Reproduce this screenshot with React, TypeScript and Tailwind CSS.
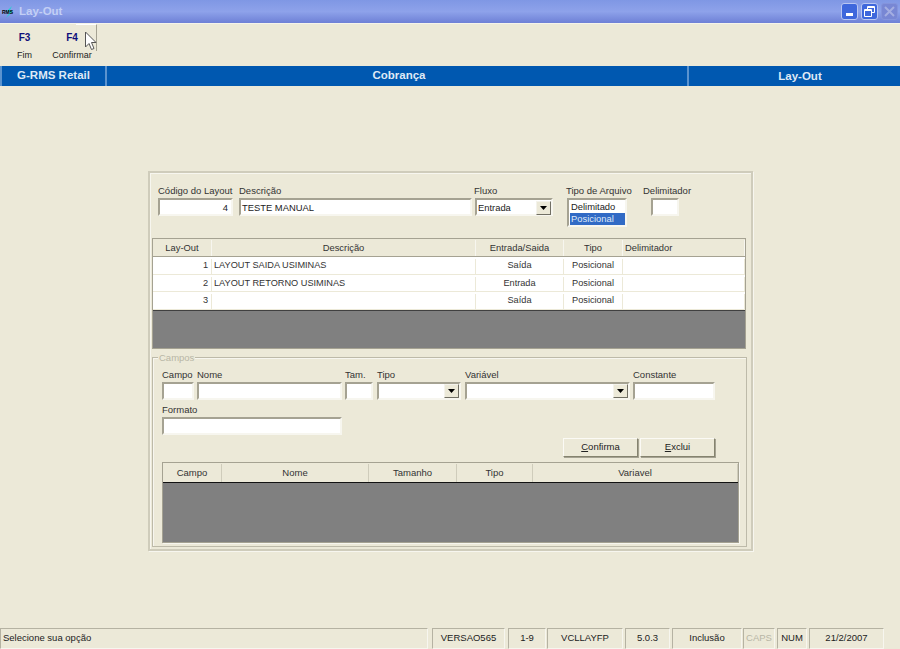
const font = { fontFamily: '"Liberation Sans", Arial, sans-serif' }

const sunken =
  "border-2 border-t-[#a5a292] border-l-[#a5a292] border-r-[#f7f6ef] border-b-[#f7f6ef] bg-white"

const Field = ({ className = "", children }: { className?: string; children?: React.ReactNode }) => (
  <div className={`${sunken} h-[18px] flex items-center px-px text-[9.4px] leading-none text-[#222] ${className}`}>
    {children}
  </div>
)

const Arrow = () => (
  <div className="ml-auto -mr-px flex h-[14px] w-[15px] shrink-0 items-center justify-center border border-t-[#f4f3ec] border-l-[#f4f3ec] border-r-[#716f64] border-b-[#716f64] bg-[#ece9d8]">
    <svg width="7" height="4" viewBox="0 0 7 4">
      <path d="M0 0h7L3.5 4z" fill="#000" />
    </svg>
  </div>
)

const Label = ({ children, className = "" }: { children: React.ReactNode; className?: string }) => (
  <div className={`h-[14px] whitespace-nowrap text-[9.5px] leading-[14px] text-[#333] ${className}`}>{children}</div>
)

const layoutCols = ["w-[59px]", "w-[264px]", "w-[88px]", "w-[59px]", "flex-1"]
const layoutHead = ["Lay-Out", "Descrição", "Entrada/Saida", "Tipo", "Delimitador"]
const layoutRows = [
  ["1", "LAYOUT SAIDA USIMINAS", "Saída", "Posicional", ""],
  ["2", "LAYOUT RETORNO USIMINAS", "Entrada", "Posicional", ""],
  ["3", "", "Saída", "Posicional", ""],
]

const campoCols = ["w-[59px]", "w-[147px]", "w-[88px]", "w-[76px]", "flex-1"]
const campoHead = ["Campo", "Nome", "Tamanho", "Tipo", "Variavel"]

const statusItems = [
  { text: "VERSAO565", w: "w-[73px]", ml: "ml-[4px]" },
  { text: "1-9", w: "w-[38px]", ml: "ml-[3px]" },
  { text: "VCLLAYFP", w: "w-[76px]", ml: "ml-[1px]" },
  { text: "5.0.3", w: "w-[45px]", ml: "ml-[2px]" },
  { text: "Inclusão", w: "w-[70px]", ml: "ml-[2px]" },
  { text: "CAPS", w: "w-[32px]", ml: "ml-[1px]", off: true },
  { text: "NUM", w: "w-[30px]", ml: "ml-[2px]" },
  { text: "21/2/2007", w: "w-[75px]", ml: "ml-[2px]" },
]

export default function App() {
  return (
    <div className="flex h-[649px] w-[900px] flex-col overflow-hidden bg-[#ece9d8]" style={font}>
      {/* title bar */}
      <div className="flex h-[24px] shrink-0 items-center border-b border-[#f5f4ea] bg-gradient-to-b from-[#7f97e4] via-[#8ea2ea] to-[#6e80d6] pr-[2px]">
        <div className="relative ml-[1px] h-[14px] w-[17px] shrink-0">
          <svg className="absolute left-[4px] top-0" width="9" height="14" viewBox="0 0 9 14">
            <path d="M7 1 2 6l3 1-4 6 7-7-3-1z" fill="#19d6d0" />
          </svg>
          <span className="absolute left-[1px] top-[4px] text-[5px] font-bold leading-[6px] text-black">RMS</span>
        </div>
        <span className="ml-[1px] text-[11.5px] font-bold text-[#c3cff5]">Lay-Out</span>
        <div className="ml-auto flex items-center gap-[3px]">
          <div className="flex h-[17px] w-[17px] items-end justify-center rounded-[3px] border border-[#b9c6f2] bg-[#3e67dc] pb-[3px]">
            <div className="h-[3px] w-[7px] bg-white" />
          </div>
          <div className="flex h-[17px] w-[17px] items-center justify-center rounded-[3px] border border-[#b9c6f2] bg-[#3e67dc]">
            <svg width="11" height="11" viewBox="0 0 11 11" fill="none" stroke="#fff">
              <path d="M3.5 3V.5h7v6H8" />
              <path d="M.5 3.5h7v7h-7z" />
              <path d="M.5 4.5h7M3.5 1.5h7" />
            </svg>
          </div>
          <div className="flex h-[17px] w-[17px] items-center justify-center rounded-[3px] border border-[#8494dc] bg-[#7887d4]">
            <svg width="11" height="11" viewBox="0 0 11 11" stroke="#a4aee2" strokeWidth="2">
              <path d="M1 1l9 9M10 1l-9 9" />
            </svg>
          </div>
        </div>
      </div>

      {/* toolbar */}
      <div className="relative flex h-[42px] shrink-0 pl-[1px]">
        <div className="flex w-[47px] flex-col items-center pt-[8px]">
          <span className="text-[10px] font-bold leading-[12px] text-[#10107a]">F3</span>
          <span className="mt-[5px] text-[9px] leading-[12px] text-[#222]">Fim</span>
        </div>
        <div className="flex w-[48px] flex-col items-center pt-[8px]">
          <span className="text-[10px] font-bold leading-[12px] text-[#10107a]">F4</span>
          <span className="mt-[5px] whitespace-nowrap text-[9px] leading-[12px] text-[#222]">Confirmar</span>
        </div>
        <div className="absolute left-[76px] top-0 h-[27px] w-[21px] border-r border-t border-r-[#a5a292] border-t-white" />
        <svg className="absolute left-[84px] top-[7px]" width="13" height="20" viewBox="0 0 13 20">
          <path d="M1.5 1v15l3.5-3.5 2.5 6 2.5-1-2.5-6h4.5z" fill="#fff" stroke="#555" strokeWidth="1" />
        </svg>
      </div>

      {/* header strip */}
      <div className="flex h-[20px] shrink-0 items-center bg-[#0058b0] text-[11.5px] font-bold text-[#dfe9f5]">
        <div className="flex h-full w-[107px] items-center justify-center border-x-2 border-x-[#5a93cf]">G-RMS Retail</div>
        <div className="flex h-full w-[580px] items-center justify-center pl-[4px]">Cobrança</div>
        <div className="flex h-full flex-1 items-center justify-center border-l-2 border-l-[#5a93cf] pl-[11px] pt-px">Lay-Out</div>
      </div>

      {/* main panel */}
      <div className="flex-1 pl-[148px] pt-[85px]">
        <div className="h-[380px] w-[605px] border-2 border-[#cfccbb] shadow-[inset_1px_1px_0_#f7f6ef,1px_1px_0_#f7f6ef]">
          {/* top fields */}
          <div className="flex pl-[8px] pt-[11px]">
            <div className="w-[81px]">
              <Label>Código do Layout</Label>
              <Field className="w-[75px] justify-end pr-[3px] pt-[2px]">4</Field>
            </div>
            <div className="w-[235px]">
              <Label>Descrição</Label>
              <Field className="w-[233px] pl-[1px] pt-[2px]">TESTE MANUAL</Field>
            </div>
            <div className="w-[92px]">
              <Label>Fluxo</Label>
              <Field className="ml-px w-[78px] pl-[1px] pt-[2px]">
                Entrada
                <Arrow />
              </Field>
            </div>
            <div className="w-[77px]">
              <Label>Tipo de Arquivo</Label>
              <div className={`${sunken} ml-px w-[60px] pl-[1px] text-[9.4px] leading-[13px] text-[#222]`}>
                <div className="h-[13px] pl-px">Delimitado</div>
                <div className="h-[12px] bg-[#316ac5] pl-px leading-[12px] text-[#dfe8f8]">Posicional</div>
              </div>
            </div>
            <div>
              <Label>Delimitador</Label>
              <Field className="ml-[8px] w-[28px]" />
            </div>
          </div>

          {/* layouts grid */}
          <div className="ml-[2px] mt-[11px] flex h-[111px] w-[594px] flex-col border border-[#a5a292] bg-[#808080]">
            <div className="flex h-[18px] shrink-0 border-b border-[#a5a292] bg-[#ece9d8] pt-px text-[9.4px] text-[#333]">
              {layoutHead.map((h, i) => (
                <div
                  key={h}
                  className={`${layoutCols[i]} flex items-center border-r border-r-[#f7f6ef] ${i === 4 ? "pl-[2px]" : "justify-center"}`}
                >
                  {h}
                </div>
              ))}
            </div>
            {layoutRows.map((row) => (
              <div key={row[0]} className="flex h-[17.5px] shrink-0 border-b border-[#ece9d8] bg-white pt-[2px] text-[9.2px] text-[#333]">
                {row.map((c, i) => (
                  <div
                    key={i}
                    className={`${layoutCols[i]} flex items-center border-r border-r-[#ece9d8] ${
                      i === 0 ? "justify-end pr-[3px]" : i === 1 ? "pl-[2px]" : "justify-center"
                    }`}
                  >
                    {c}
                  </div>
                ))}
              </div>
            ))}
            <div className="flex-1 border-t border-[#404040]" />
          </div>

          {/* Campos group */}
          <div className="relative ml-[2px] mt-[8px] h-[190px] w-[595px] border border-[#bdbaa9] pl-[9px] pt-[10px] shadow-[inset_1px_1px_0_#f7f6ef]">
            <span className="absolute -top-[6px] left-[5px] bg-[#ece9d8] px-px text-[9.5px] leading-[12px] text-[#b8b6a6]">Campos</span>
            <div className="flex">
              <div className="mr-[3px] w-[32px]">
                <Label>Campo</Label>
                <Field className="w-[32px]" />
              </div>
              <div className="mr-[3px] w-[145px]">
                <Label>Nome</Label>
                <Field className="w-[145px]" />
              </div>
              <div className="mr-[4px] w-[28px]">
                <Label>Tam.</Label>
                <Field className="w-[28px]" />
              </div>
              <div className="mr-[4px] w-[84px]">
                <Label>Tipo</Label>
                <Field className="w-[84px]">
                  <Arrow />
                </Field>
              </div>
              <div className="mr-[3px] w-[165px]">
                <Label>Variável</Label>
                <Field className="w-[165px]">
                  <Arrow />
                </Field>
              </div>
              <div className="w-[82px]">
                <Label>Constante</Label>
                <Field className="w-[82px]" />
              </div>
            </div>
            <div className="mt-[3px] w-[180px]">
              <Label>Formato</Label>
              <Field className="w-[180px]" />
            </div>

            <div className="ml-[401px] mt-[3px] flex h-[20px] gap-[2px]">
              <button className="h-[19px] w-[75px] border border-t-[#fbfaf5] border-l-[#fbfaf5] border-r-[#85836f] border-b-[#85836f] bg-[#ece9d8] text-[9.5px] text-[#222] shadow-[1px_1px_0_#a5a292]">
                <span className="underline">C</span>onfirma
              </button>
              <button className="h-[19px] w-[75px] border border-t-[#fbfaf5] border-l-[#fbfaf5] border-r-[#85836f] border-b-[#85836f] bg-[#ece9d8] text-[9.5px] text-[#222] shadow-[1px_1px_0_#a5a292]">
                <span className="underline">E</span>xclui
              </button>
            </div>

            <div className="mt-[4px] flex h-[81px] w-[577px] flex-col border border-[#a5a292] bg-[#808080] shadow-[1px_1px_0_#f7f6ef]">
              <div className="flex h-[20px] shrink-0 border-b border-[#111] bg-[#ece9d8] pt-px text-[9.5px] text-[#333]">
                {campoHead.map((h, i) => (
                  <div key={h} className={`${campoCols[i]} flex items-center justify-center border-r border-r-[#cfccbb]`}>
                    {h}
                  </div>
                ))}
              </div>
              <div className="flex-1" />
            </div>
          </div>
        </div>
      </div>

      {/* status bar */}
      <div className="flex h-[21px] shrink-0 text-[9.5px] text-[#222]">
        <div className="flex w-[428px] items-center border border-t-[#b5b2a2] border-l-[#b5b2a2] border-r-[#f7f6ef] border-b-[#f7f6ef] pl-[2px]">
          Selecione sua opção
        </div>
        {statusItems.map((s) => (
          <div
            key={s.text}
            className={`${s.w} ${s.ml} flex items-center justify-center border border-t-[#b5b2a2] border-l-[#b5b2a2] border-r-[#f7f6ef] border-b-[#f7f6ef] ${s.off ? "text-[#b8b6a6]" : ""}`}
          >
            {s.text}
          </div>
        ))}
      </div>
    </div>
  )
}
